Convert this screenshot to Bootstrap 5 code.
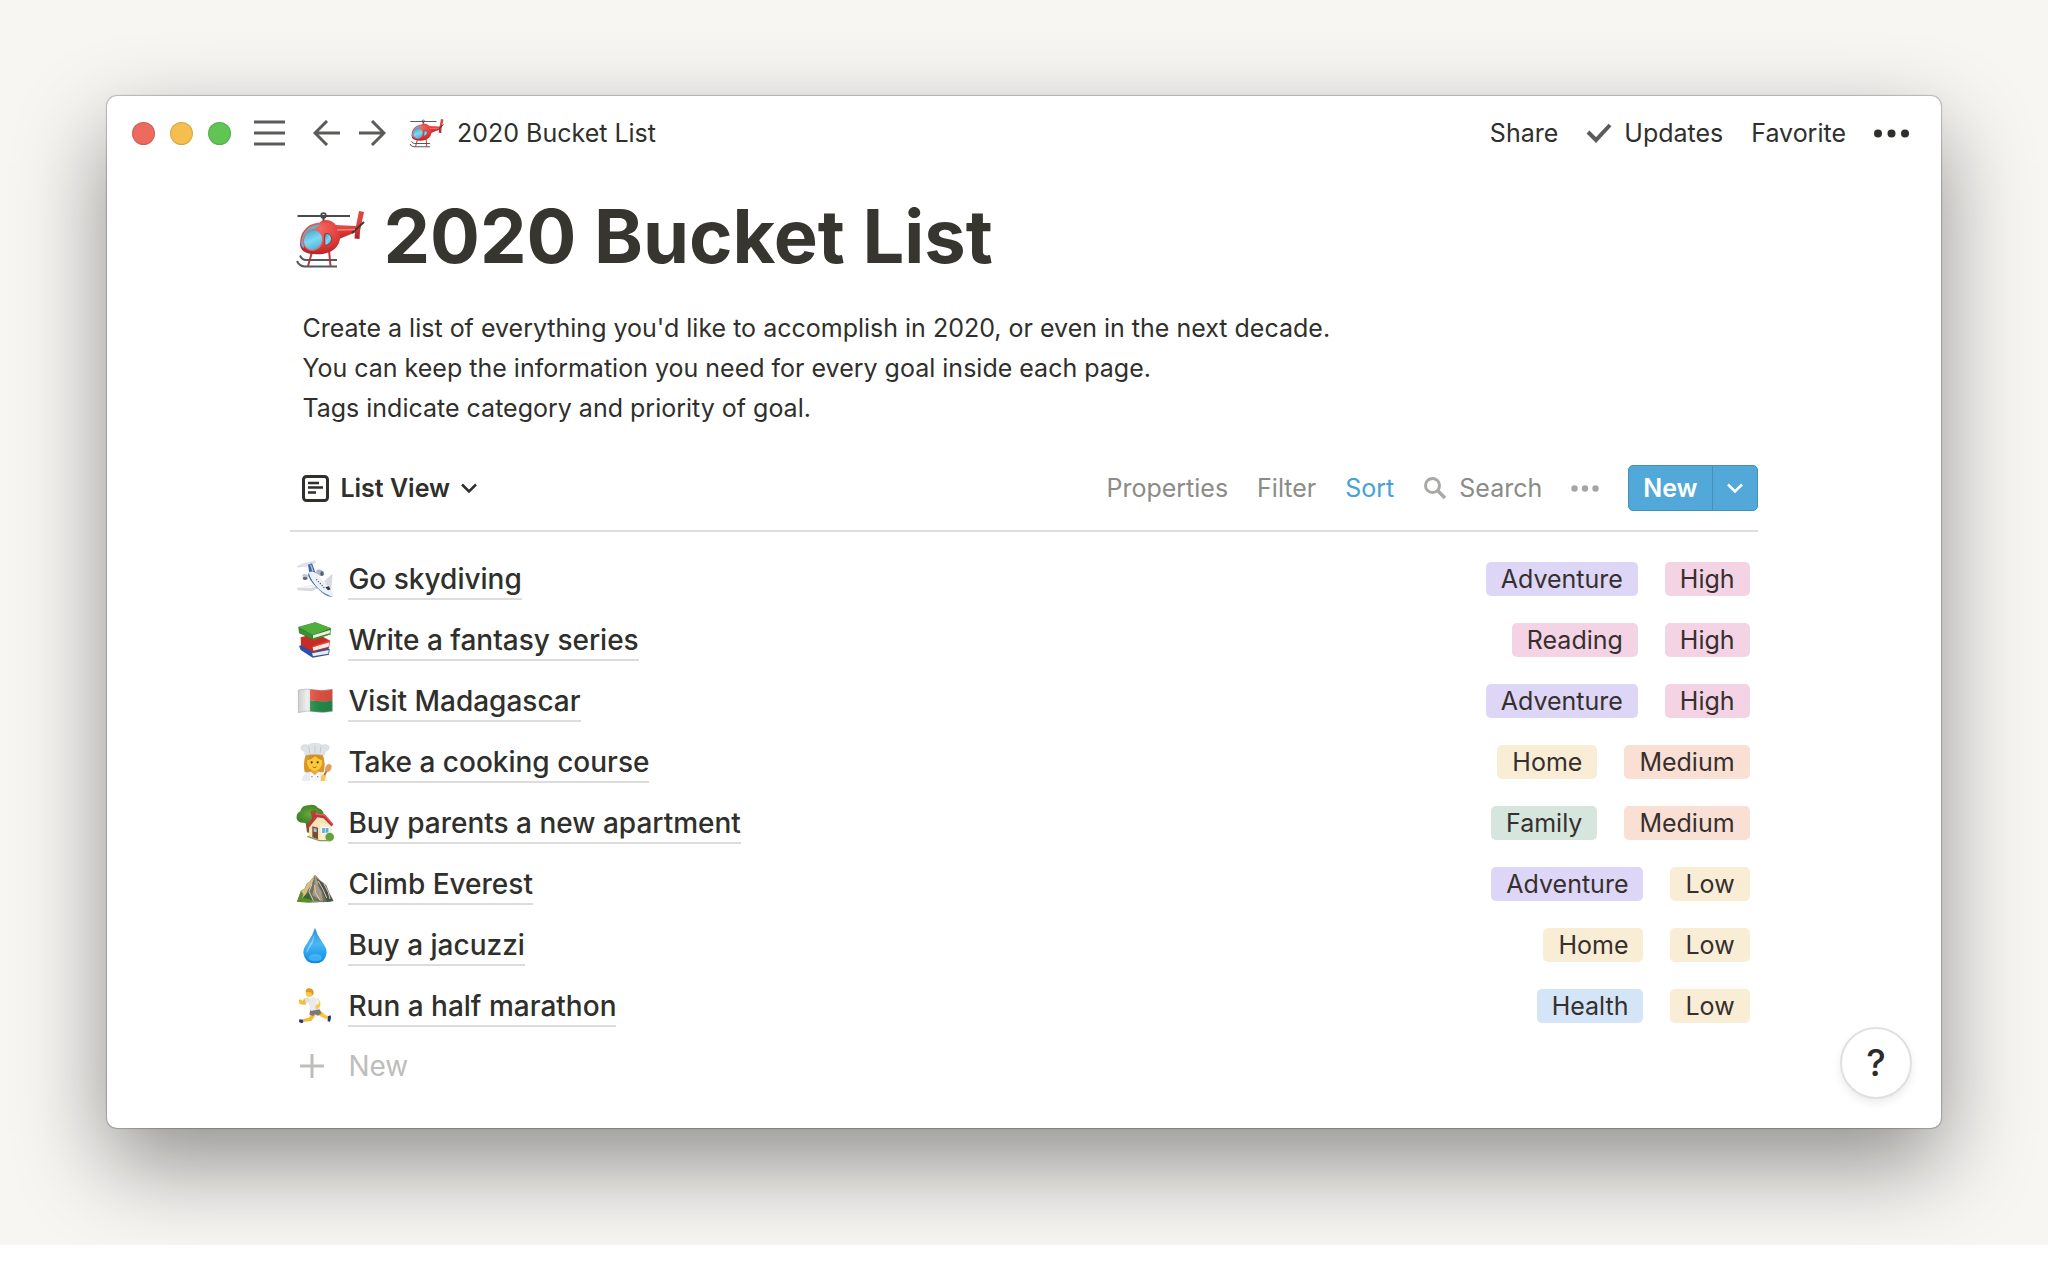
<!DOCTYPE html>
<html lang="en">
<head>
<meta charset="utf-8">
<meta name="viewport" content="width=device-width, initial-scale=1">
<title>2020 Bucket List</title>
<link href="https://cdn.jsdelivr.net/npm/bootstrap@5.3.0/dist/css/bootstrap.min.css" rel="stylesheet">
<style>
  :root { --ink: #37352f; --ink-dark: #2f2f2c; --muted: #8b8b88; --blue: #52a8d8; }
  body { background: #fff; color: var(--ink-dark); font-family: Inter, "Liberation Sans", sans-serif; font-size: 25px; line-height: 40px; }
  .backdrop { background: #f7f6f3; padding: 96px 107px 117px; overflow: hidden; }
  .app-window { background: #fff; border-radius: 10px; box-shadow: 0 0 1px 1px rgba(0,0,0,.22), 0 36px 90px rgba(0,0,0,.42); }
  .titlebar { height: 74px; padding: 0 32px 0 25px; }
  .plain { border: 0; background: none; padding: 0; color: inherit; line-height: 40px; white-space: nowrap; display: flex; align-items: center; }
  .light { width: 23px; height: 23px; border-radius: 50%; border: 1px solid rgba(0,0,0,.12); padding: 0; }
  .light-red { background: #ed6a5e; } .light-yellow { background: #f4bf4f; } .light-green { background: #61c554; }
  .lights { gap: 15px; margin-right: 23px; }
  .nav-arrows { gap: 19px; margin: 0 23px 0 28px; }
  .actions { gap: 28px; }
  svg { display: block; flex: none; }
  .page { padding: 18px 10% 33px; }
  .page-title { font-size: 74px; font-weight: 700; line-height: 96px; color: var(--ink); margin: 0; gap: 16px; padding-left: 5px; }
  .page-title svg { margin-top: 6px; }
  .intro { padding: 24px 12px 0; margin: 0; }
  .toolbar { padding: 37px 0 19px; border-bottom: 2px solid #dededc; }
  .view-name { font-weight: 600; gap: 11px; padding-left: 12px; }
  .tools { gap: 29px; color: var(--muted); }
  .tools .sort-on { color: #46a1d6; }
  .btn-blue { background: var(--blue); color: #fff; border: 1px solid #4590b9; border-radius: 5px; font-size: 25px; line-height: 40px; height: 46px; padding: 0 14px; font-weight: 600; display: flex; align-items: center; }
  .btn-blue:hover { background: #468fb8; color: #fff; }
  .goals { padding-top: 16px; }
  .goal { height: 61px; padding: 0 8px 0 6px; border: 0; background: none; color: inherit; }
  .goal-name { font-size: 28px; line-height: 38px; padding-top: 2px; font-weight: 500; color: var(--ink-dark); text-decoration: none; border-bottom: 2px solid #dcdcda; margin-left: 14px; }
  .tags { gap: 27px; }
  .pill { line-height: 34px; border-radius: 5px; padding: 0 15px; color: #35302e; }
  .t-purple { background: #ded6f6; } .t-pink { background: #f4d3e5; } .t-yellow { background: #f9edd6; }
  .t-orange { background: #fadfd4; } .t-green { background: #d6e6df; } .t-blue { background: #d5e5f8; }
  .add-row { height: 59px; font-size: 28px; color: #bdbdbb; padding-left: 10px; gap: 24px; }
  .help { right: 29px; bottom: 29px; width: 72px; height: 72px; background: #fff; border: 2px solid #e0e0df; box-shadow: 0 4px 8px rgba(0,0,0,.08); font-size: 37px; font-weight: 500; color: #2b2b29; padding: 0; }
</style>
<script src="https://cdn.jsdelivr.net/npm/bootstrap@5.3.0/dist/js/bootstrap.bundle.min.js"></script>
</head>
<body>
<svg width="0" height="0" class="position-absolute" aria-hidden="true">
  <defs>
    <radialGradient id="gRed" cx=".5" cy=".2" r=".9"><stop offset="0" stop-color="#f4685f"/><stop offset=".6" stop-color="#dc3a38"/><stop offset="1" stop-color="#a51f25"/></radialGradient>
    <linearGradient id="gGlass" x1="0" y1="0" x2="1" y2="1"><stop offset="0" stop-color="#2f9fc9"/><stop offset=".5" stop-color="#7fd8f2"/><stop offset="1" stop-color="#3aa6d6"/></linearGradient>
    <linearGradient id="gDrop" x1="0" y1="0" x2="0" y2="1"><stop offset="0" stop-color="#2f8fd0"/><stop offset=".45" stop-color="#4ab8f5"/><stop offset=".8" stop-color="#1e9bee"/><stop offset="1" stop-color="#1385d8"/></linearGradient>
    <radialGradient id="gTree"><stop offset="0" stop-color="#6aa83c"/><stop offset="1" stop-color="#3f8527"/></radialGradient>
    <linearGradient id="gFlag"><stop offset="0" stop-color="#000" stop-opacity=".12"/><stop offset=".25" stop-color="#fff" stop-opacity=".15"/><stop offset=".6" stop-color="#000" stop-opacity=".08"/><stop offset="1" stop-color="#000" stop-opacity=".14"/></linearGradient>
    <symbol id="heli" viewBox="0 0 72 72">
      <path d="M2.500 13H55" stroke="#4a4a4c" stroke-width="1.800"/>
      <circle cx="28.500" cy="12.500" r="2.400" fill="none" stroke="#4a4a4c" stroke-width="1.600"/><path d="M28.500 14v5" stroke="#444" stroke-width="2"/>
      <path d="M17 49l-4 14M34 47l1.500 16" stroke="#c93336" stroke-width="2"/>
      <path d="M5 52.500q2 4.500 6 4.500h31M2 58q2.500 5.500 8 5.500h32" fill="none" stroke="#55585c" stroke-width="2"/>
      <path d="M24 23q0-6 7-6 6 0 10 5l20 1 3-15 5 1-4 19-.500 8-5-.500.500-6L44 36z" fill="url(#gRed)"/>
      <path d="M5 41Q5 28 15 22q11-5 22-1 9 5 8 15-2 12-17 15-23 2-23-10z" fill="url(#gRed)"/>
      <path d="M6 40q1-11 9-16 7-3 11-2-8 4-12 10-5 7-5 13-3-1-3-5z" fill="#57b6d4"/>
      <ellipse cx="18" cy="37" rx="9.500" ry="10.500" transform="rotate(25 18 37)" fill="url(#gGlass)" stroke="#e9655d" stroke-width="1.200"/>
      <path d="M30 31q5-2 7 5-2 6-7 6.500-1-6 0-11.500z" fill="url(#gGlass)" stroke="#a8262a"/>
      <path d="M57 30l12-11" stroke="#37393d" stroke-width="2"/><path d="M42 27l18-.500" stroke="#f4807a" stroke-width="1.500"/>
    </symbol>
    <symbol id="plane" viewBox="0 0 114 114">
      <path d="M2 84l44-8 24 6-22 12-42-3z" fill="#d5dae1"/><path d="M2 84l44-8 18 2-20 7z" fill="#f2f4f7"/>
      <path d="M84 64l24-22 2 4-4 40-12-6z" fill="#d8dce2"/>
      <path d="M4 19l18-8 34-9 2 6-22 10-30 4z" fill="#dfe3ea" stroke="#bcc4cf"/>
      <path d="M36 14l12-4 12 32-18 8z" fill="#3c66a4"/><path d="M44 14l7 20" stroke="#a9c2e4" stroke-width="4"/>
      <path d="M38 38q12-8 22 2l34 38q18 16 19 30-14 3-30-9Q52 78 38 48z" fill="#edf0f4"/>
      <path d="M38 38q8 26 30 48 20 18 43 24-16 2-32-12Q46 72 36 46z" fill="#4470ae"/>
      <path d="M62 30q12-4 21 6l2 8-12 4-14-9z" fill="#aeb6c0"/><ellipse cx="78" cy="41" rx="5" ry="7" fill="#596270"/>
      <path d="M18 44q10-6 20 4l-2 10-12 2z" fill="#c3c9d1"/><ellipse cx="27" cy="55" rx="7" ry="5" fill="#606873"/>
      <path d="M88 82l10-3 6 9-8 3z" fill="#2b3440"/><path d="M61 58l24 26" stroke="#34455d" stroke-width="3.500" stroke-dasharray="3 5"/>
    </symbol>
    <symbol id="books" viewBox="0 0 114 114">
      <path d="M9 74l52-12 40 22-2 17-49 9-36-23z" fill="#2d4fa5"/><path d="M48 97l50-10-1 11-46 8z" fill="#ecebe4"/>
      <path d="M14 49l48-12 40 22-3 22-48 12-36-20z" fill="#c92c27"/><path d="M50 78l50-14-2 13-46 12z" fill="#efede6"/><path d="M50 77l51-17" stroke="#e84138" stroke-width="4"/>
      <path d="M7 18L58 4l47 18-2 17-52 17L9 36z" fill="#2f7d2b"/><path d="M51 43l52-16-2 10-50 15z" fill="#f0efe5"/>
      <path d="M7 18L58 4l47 18-54 20z" fill="#4fae3c"/><path d="M51 56l53-17" stroke="#3c9830" stroke-width="3"/>
      <path d="M9 22l40 20v12L10 36z" fill="#3b8f32"/>
    </symbol>
    <symbol id="flag" viewBox="0 0 114 114">
      <path d="M7 24q26-6 51 0t51-2v66q-26 6-51 1t-51 3z" fill="#ececec"/>
      <path d="M42 22q34 5 67 0v34q-34 4-67-1z" fill="#ef5646"/><path d="M42 55q34 5 67 1v32q-34 6-67 0z" fill="#28924f"/>
      <path d="M7 24q26-6 51 0t51-2v66q-26 6-51 1t-51 3z" fill="url(#gFlag)" stroke="#9a9a9a" stroke-width="1.500"/>
    </symbol>
    <symbol id="chef" viewBox="0 0 114 114">
      <path d="M30 34h50q10 26 3 53l-14 4H40l-14-4q-6-28 4-53z" fill="#d9962a"/>
      <path d="M18 114q0-24 24-28h28q22 4 24 28z" fill="#e9edf3"/><path d="M42 86l14 10 14-10 2 28H42z" fill="#f8f9fb"/>
      <path d="M47 74h18v14l-9 9-9-9z" fill="#f0a92f"/>
      <ellipse cx="56" cy="58" rx="23" ry="25" fill="#fcc93b"/><path d="M34 52q4-14 10-18h24q8 6 11 18-12-3-22-12-8 9-23 12z" fill="#d08e29"/>
      <circle cx="47" cy="58" r="3.300" fill="#4a3019"/><circle cx="65" cy="58" r="3.300" fill="#4a3019"/><path d="M48 70q8 5 16 0-8 10-16 0z" fill="#b5402e"/>
      <path d="M28 37l-4-12Q10 20 16 9q8-7 20-3 8-6 21-5 13-1 21 5 12-4 20 3 5 11-9 16l-4 12q-28-7-57 0z" fill="#dfe3e6" stroke="#c3c8cc"/><path d="M38 10l3 20m16-22v22m18-20l-3 20" stroke="#bcc2c7" stroke-width="2.500"/>
      <circle cx="48" cy="101" r="2" fill="#4775ac"/><circle cx="65" cy="101" r="2" fill="#4775ac"/>
      <path d="M93 80l-14 30" stroke="#b96f39" stroke-width="6"/><ellipse cx="97" cy="75" rx="9" ry="12" transform="rotate(24 97 75)" fill="#e19c61"/><path d="M76 98q8-6 13 2l-4 14H74z" fill="#fbc53a"/>
    </symbol>
    <symbol id="house" viewBox="0 0 114 114">
      <path d="M28 48l14-3 5 44-14-4z" fill="#7b5130"/>
      <path d="M2 44Q0 28 13 22 17 3 38 4q18-5 28 8 18 4 17 24-10 18-32 14-9 12-27 6Q7 58 2 44z" fill="url(#gTree)"/>
      <path d="M44 22l14-4 4 18-14 6z" fill="#a8482f"/>
      <path d="M40 58l28-24 38 30v38l-34 9-34-12z" fill="#f6e2b2"/><path d="M72 56l34 8v38l-34 9z" fill="#fbedc6"/>
      <path d="M32 64l28-36 26 3 26 31-6 5-24-24-18-3-26 32z" fill="#b83a3c"/><path d="M58 30l28 3 25 28" fill="none" stroke="#dd6560" stroke-width="4"/>
      <path d="M49 67l17 4v35l-17-6z" fill="#7b4737"/><path d="M53 72l9 2v11l-9-2z" fill="#8ccde4"/>
      <path d="M77 70l22 1v16l-22 2z" fill="#58aee0" stroke="#fff" stroke-width="3"/><path d="M88 70v18" stroke="#fff" stroke-width="2"/>
      <circle cx="101" cy="99" r="13" fill="#63a13a"/><path d="M34 97l36 13h34" fill="none" stroke="#849d55" stroke-width="4"/>
    </symbol>
    <symbol id="mountain" viewBox="0 0 114 114">
      <path d="M3 110l12-34 10-4 8-17 8-5 16-21 14 16 8 6 12 10 9 22 13 24-30 5-40-3z" fill="#716f62"/>
      <path d="M57 29l-9 28-14 20-8 32-22 1 12-34 10-4 8-17 8-5z" fill="#d8bd82"/><path d="M57 29l14 16-6 16 12 20 4 29-32-20 6-28z" fill="#a59c83"/>
      <path d="M60 37l16 36 17 37 18-2-14-24-8-20-18-17z" fill="#4c514d"/><path d="M67 48l15 27 10 24M48 57l-9 23 13 27M56 60l2 22 15 25M84 57l13 25 5 20" fill="none" stroke="#d9ceb0" stroke-width="3"/>
      <path d="M3 110l12-31 7 9-3 12 15-4 14 13 24 3-36 1z" fill="#588d2e"/><path d="M20 98l16-17 12 24zM88 101l10 3 14 4-20 3z" fill="#3c6631"/>
    </symbol>
    <symbol id="drop" viewBox="0 0 114 114">
      <path d="M57 5q6 22 22 44 14 19 13 31-3 31-35 32-32-1-35-32-1-12 13-31Q51 27 57 5z" fill="url(#gDrop)"/>
      <path d="M55 24q-4 18-14 32-11 17-9 27 5-14 14-25 9-14 9-34z" fill="#a7dffa" opacity=".7"/><ellipse cx="58" cy="95" rx="20" ry="11" fill="#77d8ff" opacity=".4"/>
    </symbol>
    <symbol id="runner" viewBox="0 0 114 114">
      <path d="M48 75l13 6-15 21-27 3-1-8 21-5z" fill="#f6b734"/><path d="M55 74l15-7 17 16 14 7-3 8-20-7-20-12z" fill="#fac43d"/>
      <path d="M44 66l25-2 7 16-11 6-9-5-5 6-11-5z" fill="#77777d"/>
      <path d="M32 35l20-5 16 8 3 29-26 5-6-19z" fill="#e8eaf0"/><path d="M37 36l-9 18-17-3-3-12 7-2 4 6 6-9z" fill="#f8bb36"/><path d="M25 33l13-2 3 14-12 2z" fill="#dbdfe7"/>
      <path d="M64 34q13 9 8 25l-10 8-5-4 6-13-8-5z" fill="#fbc842"/><path d="M61 34l10 9-5 10-10-6z" fill="#f0f1f5"/>
      <circle cx="40" cy="19" r="11" fill="#fbc83e"/><path d="M29 15q0-12 11-11 14 1 13 16l-5 6-2-10q-8 0-17-1z" fill="#dc9a27"/>
      <path d="M10 97l10 1 2 8-4 3-9-4zM96 88l8-3 1 7-3 12-7-1z" fill="#253273"/>
    </symbol>
  </defs>
</svg>

<div class="backdrop">
  <div class="app-window position-relative">
    <header class="titlebar d-flex align-items-center justify-content-between">
      <div class="d-flex align-items-center">
        <div class="lights d-flex">
          <button class="light light-red" aria-label="Close"></button>
          <button class="light light-yellow" aria-label="Minimize"></button>
          <button class="light light-green" aria-label="Zoom"></button>
        </div>
        <button class="plain" aria-label="Menu"><svg width="31" height="26" viewBox="0 0 31 26"><path d="M0 2h31M0 13h31M0 24h31" stroke="#5b5b59" stroke-width="3"/></svg></button>
        <div class="nav-arrows d-flex">
          <button class="plain" aria-label="Back"><svg width="27" height="26" viewBox="0 0 27 26"><path d="M27 13H2M14 1L2 13l12 12" fill="none" stroke="#5b5b59" stroke-width="3"/></svg></button>
          <button class="plain" aria-label="Forward"><svg width="27" height="26" viewBox="0 0 27 26"><path d="M0 13h25M13 1l12 12-12 12" fill="none" stroke="#5b5b59" stroke-width="3"/></svg></button>
        </div>
        <svg width="36" height="36" class="me-2"><use href="#heli"/></svg>
        <span class="ms-1">2020 Bucket List</span>
      </div>
      <div class="actions d-flex align-items-center">
        <button class="plain">Share</button>
        <button class="plain"><svg width="26" height="20" viewBox="0 0 26 20" class="me-2"><path d="M2 9l8 8L24 2" fill="none" stroke="#5b5b59" stroke-width="4"/></svg><span class="ms-1">Updates</span></button>
        <button class="plain">Favorite</button>
        <button class="plain" aria-label="More"><svg width="35" height="9" viewBox="0 0 35 9" fill="#2f2f2c"><circle cx="4" cy="4.500" r="4"/><circle cx="17.500" cy="4.500" r="4"/><circle cx="31" cy="4.500" r="4"/></svg></button>
      </div>
    </header>

    <main class="page">
      <h1 class="page-title d-flex align-items-center"><svg width="72" height="72"><use href="#heli"/></svg>2020 Bucket List</h1>
      <p class="intro">Create a list of everything you'd like to accomplish in 2020, or even in the next decade.<br>You can keep the information you need for every goal inside each page.<br>Tags indicate category and priority of goal.</p>

      <div class="toolbar d-flex align-items-center justify-content-between">
        <button class="plain view-name"><svg width="27" height="27" viewBox="0 0 27 27"><rect x="1.500" y="1.500" width="24" height="24" rx="3" fill="none" stroke="#2f2f2c" stroke-width="3"/><path d="M6 8h11M6 12.500h15M6 17.500h8" stroke="#2f2f2c" stroke-width="2.500"/></svg>List View<svg width="16" height="11" viewBox="0 0 16 11"><path d="M1 1.500l7 7 7-7" fill="none" stroke="#2f2f2c" stroke-width="2.500"/></svg></button>
        <div class="tools d-flex align-items-center">
          <button class="plain">Properties</button>
          <button class="plain">Filter</button>
          <button class="plain sort-on">Sort</button>
          <button class="plain"><svg width="24" height="24" viewBox="0 0 24 24" class="me-2"><circle cx="9.500" cy="9.500" r="7" fill="none" stroke="#a9a9a7" stroke-width="3"/><path d="M14.500 14.500l7.500 7.500" stroke="#a9a9a7" stroke-width="3.500"/></svg><span class="ms-1">Search</span></button>
          <button class="plain" aria-label="More options"><svg width="28" height="7" viewBox="0 0 28 7" fill="#a5a5a3"><circle cx="3.500" cy="3.500" r="3.200"/><circle cx="14" cy="3.500" r="3.200"/><circle cx="24.500" cy="3.500" r="3.200"/></svg></button>
          <div class="btn-group">
            <button class="btn btn-blue">New</button>
            <button class="btn btn-blue" aria-label="New options"><svg width="16" height="11" viewBox="0 0 16 11"><path d="M1 1.500l7 7 7-7" fill="none" stroke="#fff" stroke-width="2.500"/></svg></button>
          </div>
        </div>
      </div>

      <ul class="goals list-group list-group-flush">
        <li class="goal list-group-item d-flex align-items-center"><svg width="38" height="38"><use href="#plane"/></svg><a href="#" class="goal-name">Go skydiving</a><div class="tags d-flex ms-auto"><span class="pill t-purple">Adventure</span><span class="pill t-pink">High</span></div></li>
        <li class="goal list-group-item d-flex align-items-center"><svg width="38" height="38"><use href="#books"/></svg><a href="#" class="goal-name">Write a fantasy series</a><div class="tags d-flex ms-auto"><span class="pill t-pink">Reading</span><span class="pill t-pink">High</span></div></li>
        <li class="goal list-group-item d-flex align-items-center"><svg width="38" height="38"><use href="#flag"/></svg><a href="#" class="goal-name">Visit Madagascar</a><div class="tags d-flex ms-auto"><span class="pill t-purple">Adventure</span><span class="pill t-pink">High</span></div></li>
        <li class="goal list-group-item d-flex align-items-center"><svg width="38" height="38"><use href="#chef"/></svg><a href="#" class="goal-name">Take a cooking course</a><div class="tags d-flex ms-auto"><span class="pill t-yellow">Home</span><span class="pill t-orange">Medium</span></div></li>
        <li class="goal list-group-item d-flex align-items-center"><svg width="38" height="38"><use href="#house"/></svg><a href="#" class="goal-name">Buy parents a new apartment</a><div class="tags d-flex ms-auto"><span class="pill t-green">Family</span><span class="pill t-orange">Medium</span></div></li>
        <li class="goal list-group-item d-flex align-items-center"><svg width="38" height="38"><use href="#mountain"/></svg><a href="#" class="goal-name">Climb Everest</a><div class="tags d-flex ms-auto"><span class="pill t-purple">Adventure</span><span class="pill t-yellow">Low</span></div></li>
        <li class="goal list-group-item d-flex align-items-center"><svg width="38" height="38"><use href="#drop"/></svg><a href="#" class="goal-name">Buy a jacuzzi</a><div class="tags d-flex ms-auto"><span class="pill t-yellow">Home</span><span class="pill t-yellow">Low</span></div></li>
        <li class="goal list-group-item d-flex align-items-center"><svg width="38" height="38"><use href="#runner"/></svg><a href="#" class="goal-name">Run a half marathon</a><div class="tags d-flex ms-auto"><span class="pill t-blue">Health</span><span class="pill t-yellow">Low</span></div></li>
      </ul>
      <button class="plain add-row"><svg width="24" height="24" viewBox="0 0 24 24"><path d="M12 0v24M0 12h24" stroke="#bdbdbb" stroke-width="3"/></svg>New</button>
    </main>
    <button class="help position-absolute rounded-circle" aria-label="Help">?</button>
  </div>
</div>
</body>
</html>
